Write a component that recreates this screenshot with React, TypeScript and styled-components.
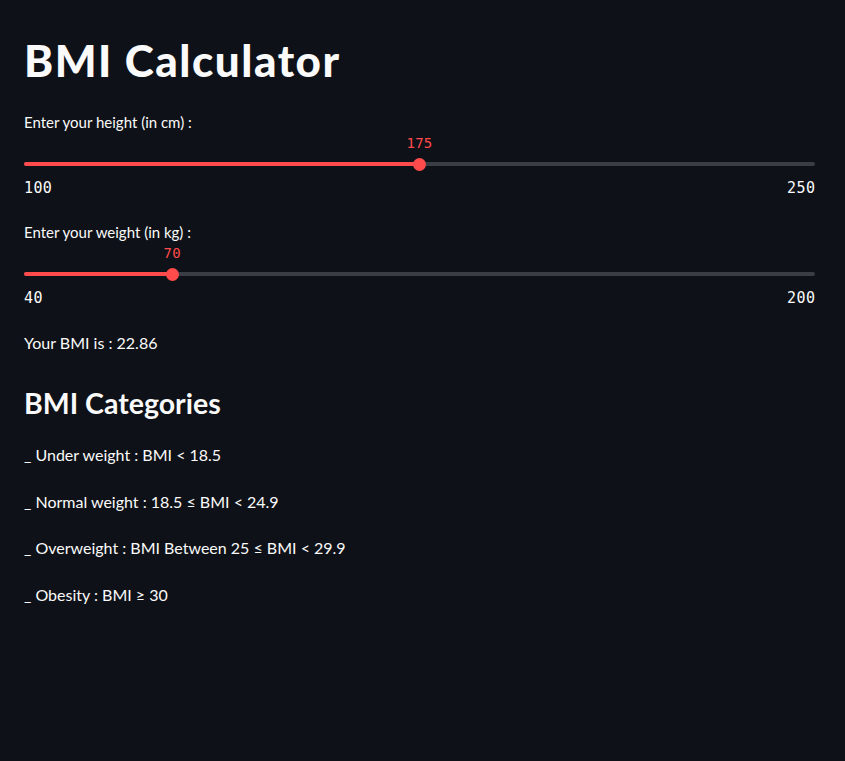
import React from "react";
import styled, { createGlobalStyle } from "styled-components";

const Global = createGlobalStyle`
  html, body { margin: 0; padding: 0; background: #0e1117; }
  body { color: #fafafa; font-family: "Lato", "Noto Sans", sans-serif; }
  * { box-sizing: border-box; }
`;

const Main = styled.main`
  width: 845px;
  min-height: 761px;
  padding: 29px 30px 0 24px;
  display: flex;
  flex-direction: column;
`;

const Title = styled.h1`
  margin: 0 0 21px;
  font-size: 44px;
  line-height: 62px;
  font-weight: 900;
  letter-spacing: 1.5px;
`;

const Sliders = styled.div`
  display: flex;
  flex-direction: column;
  gap: 24px;
  margin-bottom: 23px;
`;

const SliderBlock = styled.section`
  display: flex;
  flex-direction: column;
`;

const Label = styled.label`
  font-size: 15px;
  line-height: 20px;
  height: 20px;
`;

const SliderArea = styled.div`
  position: relative;
  height: 41px;
`;

const Track = styled.div`
  position: absolute;
  left: 0;
  right: 0;
  bottom: 7px;
  height: 4px;
  border-radius: 2px;
  background: #3b3d45;
`;

const Fill = styled.div`
  height: 100%;
  border-radius: 2px;
  background: #ff4b4b;
`;

const Thumb = styled.div`
  position: absolute;
  top: 50%;
  width: 13px;
  height: 13px;
  margin: -6.5px 0 0 -6.5px;
  border-radius: 50%;
  background: #ff4b4b;
`;

const Value = styled.span`
  position: absolute;
  top: 1px;
  transform: translateX(-50%);
  font-family: "DejaVu Sans Mono", "Liberation Mono", monospace;
  font-size: 14px;
  letter-spacing: 0.3px;
  line-height: 20px;
  color: #ff4b4b;
`;

const Ticks = styled.div`
  display: flex;
  justify-content: space-between;
  font-family: "DejaVu Sans Mono", "Liberation Mono", monospace;
  font-size: 15px;
  letter-spacing: 0.4px;
  line-height: 20px;
  color: #fafafa;
  margin-top: 5px;
  margin-right: -0.4px;
`;

const Text = styled.p`
  margin: 0;
  font-size: 16px;
  line-height: 24px;
`;

const Subtitle = styled.h3`
  margin: 28px 0 20px;
  font-size: 28.5px;
  line-height: 40px;
  font-weight: 700;
`;

const CatList = styled.div`
  display: flex;
  flex-direction: column;
  gap: 22.5px;
`;

type SliderProps = { label: string; min: number; max: number; value: number };

function Slider({ label, min, max, value }: SliderProps) {
  const pct = ((value - min) / (max - min)) * 100;
  return (
    <SliderBlock>
      <Label>{label}</Label>
      <SliderArea>
        <Value style={{ left: `${pct}%` }}>{value}</Value>
        <Track>
          <Fill style={{ width: `${pct}%` }} />
          <Thumb style={{ left: `${pct}%` }} />
        </Track>
      </SliderArea>
      <Ticks>
        <span>{min}</span>
        <span>{max}</span>
      </Ticks>
    </SliderBlock>
  );
}

export default function App() {
  const h = 175;
  const w = 70;
  const bmi = (w / Math.pow(h / 100, 2)).toFixed(2);
  return (
    <Main>
      <Global />
      <Title>BMI Calculator</Title>
      <Sliders>
        <Slider label="Enter your height (in cm) :" min={100} max={250} value={h} />
        <Slider label="Enter your weight (in kg) :" min={40} max={200} value={w} />
      </Sliders>
      <Text>Your BMI is : {bmi}</Text>
      <Subtitle>BMI Categories</Subtitle>
      <CatList>
        <Text>_ Under weight : BMI &lt; 18.5</Text>
        <Text>_ Normal weight : 18.5 ≤ BMI &lt; 24.9</Text>
        <Text>_ Overweight : BMI Between 25 ≤ BMI &lt; 29.9</Text>
        <Text>_ Obesity : BMI ≥ 30</Text>
      </CatList>
    </Main>
  );
}
